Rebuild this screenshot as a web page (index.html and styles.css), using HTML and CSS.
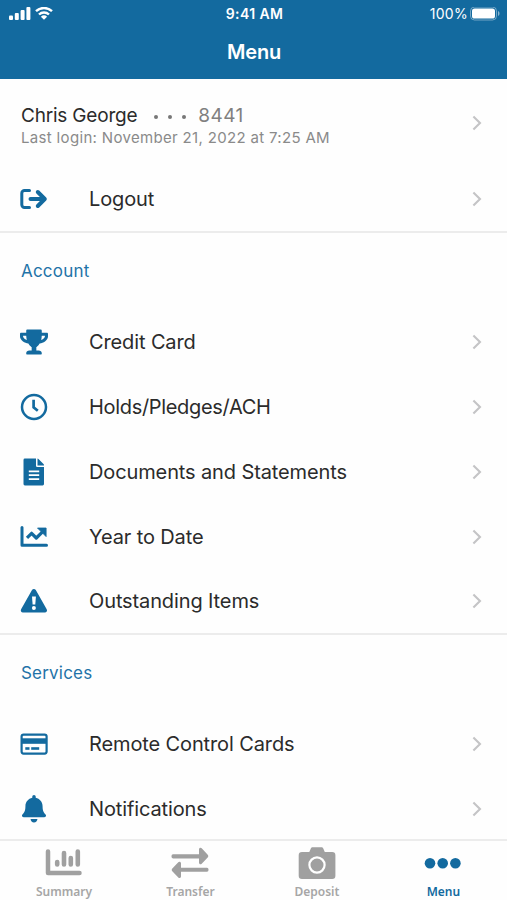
FILE: index.html
```
<!DOCTYPE html>
<html lang="en">
<head>
    <meta charset="UTF-8">
    <meta name="viewport" content="width=device-width, initial-scale=1.0">
    <title>Menu</title>
    <link rel="stylesheet" href="styles.css">
</head>
<body>
    <svg class="sprite">
        <symbol id="chevron" viewBox="0 0 10 16">
            <path d="M1.4 1.4 8 8l-6.6 6.6" fill="none" stroke="#c4c4c6" stroke-width="2.1"/>
        </symbol>
    </svg>
    <header class="header">
        <div class="status">
            <div class="status-left">
                <svg class="signal" viewBox="0 0 22 14" width="22" height="14" fill="#fff">
                    <rect x="0" y="8.5" width="4" height="4.5" rx="1"/>
                    <rect x="5.8" y="6" width="4" height="7" rx="1"/>
                    <rect x="11.6" y="3" width="4" height="10" rx="1"/>
                    <rect x="17.4" y="0" width="4" height="13" rx="1"/>
                </svg>
                <svg class="wifi" viewBox="0 0 18 14" width="18" height="14">
                    <path d="M1 4.2a11.6 11.6 0 0 1 16 0M4 7.5a7.2 7.2 0 0 1 10 0" fill="none" stroke="#fff" stroke-width="2.4"/>
                    <path d="M9 12.7 5.9 9.8a4.5 4.5 0 0 1 6.2 0z" fill="#fff"/>
                </svg>
            </div>
            <div class="time">9:41 AM</div>
            <div class="status-right">
                <span class="percent">100%</span>
                <svg class="battery" viewBox="0 0 30 14" width="30" height="14">
                    <rect x="0.5" y="0" width="26" height="13" rx="4" fill="none" stroke="#fff" stroke-opacity=".4"/>
                    <rect x="2" y="1.5" width="23" height="10" rx="2.6" fill="#fff"/>
                    <path d="M28 4c2 .8 2 4.2 0 5z" fill="#fff" fill-opacity=".5"/>
                </svg>
            </div>
        </div>
        <h1 class="title">Menu</h1>
    </header>

    <main class="content">
        <section class="group">
            <div class="profile">
                <div class="profile-info">
                    <div class="profile-name"><span class="name">Chris George</span><span class="dots"><i></i><i></i><i></i></span><span class="number">8441</span></div>
                    <div class="last-login">Last login: November 21, 2022 at 7:25 AM</div>
                </div>
                <svg class="chevron"><use href="#chevron"/></svg>
            </div>
            <div class="row">
                <svg class="icon" viewBox="0 0 28 28">
                    <path d="M9.5 5.5h-5a2.7 2.7 0 0 0-2.7 2.7v11.6a2.7 2.7 0 0 0 2.7 2.7h5" fill="none" stroke="#136a9f" stroke-width="3" stroke-linecap="round"/>
                    <path d="M10.5 14H24M17.8 7l7 7-7 7" fill="none" stroke="#136a9f" stroke-width="4" stroke-linejoin="round" stroke-linecap="round"/>
                </svg>
                <span class="label">Logout</span>
                <svg class="chevron"><use href="#chevron"/></svg>
            </div>
        </section>

        <section class="group">
            <h2 class="heading">Account</h2>
            <div class="row">
                <svg class="icon" viewBox="0 -32 576 576">
                    <path d="M552 64H448V24c0-13.3-10.7-24-24-24H152c-13.3 0-24 10.7-24 24v40H24C10.7 64 0 74.7 0 88v56c0 35.7 22.5 72.4 61.9 100.7 31.5 22.7 69.8 37.1 110 41.7C203.3 338.5 240 360 240 360v72h-48c-35.3 0-64 20.7-64 56v12c0 6.6 5.4 12 12 12h296c6.6 0 12-5.4 12-12v-12c0-35.3-28.7-56-64-56h-48v-72s36.7-21.5 68.1-73.6c40.3-4.6 78.6-19 110-41.7 39.3-28.3 61.9-65 61.9-100.7V88c0-13.3-10.7-24-24-24zM99.3 192.8C74.9 175.2 64 155.6 64 144v-16h64.2c1 32.6 5.8 61.2 12.8 86.2-15.1-5.2-29.2-12.4-41.7-21.4zM512 144c0 16.1-17.7 36.1-35.3 48.8-12.5 9-26.7 16.2-41.8 21.4 7-25 11.8-53.6 12.8-86.2H512v16z"/>
                </svg>
                <span class="label">Credit Card</span>
                <svg class="chevron"><use href="#chevron"/></svg>
            </div>
            <div class="row">
                <svg class="icon" viewBox="0 0 28 28">
                    <circle cx="14" cy="14" r="12" fill="none" stroke="#136a9f" stroke-width="2.5"/>
                    <path d="M13.6 6.8v7.6l4.2 3.4" fill="none" stroke="#136a9f" stroke-width="2.7"/>
                </svg>
                <span class="label tight">Holds/Pledges/ACH</span>
                <svg class="chevron"><use href="#chevron"/></svg>
            </div>
            <div class="row">
                <svg class="icon" viewBox="0 0 28 28">
                    <path d="M4.9.5H16v7.2a1.3 1.3 0 0 0 1.3 1.3H24v17a1.4 1.4 0 0 1-1.4 1.4H4.9A1.4 1.4 0 0 1 3.5 26V1.9A1.4 1.4 0 0 1 4.9.5z"/>
                    <path d="M17.5.5c.4 0 .7.2 1 .5l5 5c.3.3.5.6.5 1v.5h-6.5z"/>
                    <path d="M8.8 13.3h10.4M8.8 17.2h10.4M8.8 21.1h10.4" stroke="#fff" stroke-width="1.7"/>
                </svg>
                <span class="label">Documents and Statements</span>
                <svg class="chevron"><use href="#chevron"/></svg>
            </div>
            <div class="row">
                <svg class="icon" viewBox="0 0 28 28">
                    <path d="M2 4.5v17.8h24.5" fill="none" stroke="#136a9f" stroke-width="3" stroke-linecap="round" stroke-linejoin="round"/>
                    <path d="M7 14.8l4.6-4.5 4.7 4.7 6.2-6.2" fill="none" stroke="#136a9f" stroke-width="3.2" stroke-linejoin="round"/>
                    <path d="M17.5 5h8.6v8.6z" stroke="#136a9f" stroke-width=".8" stroke-linejoin="round"/>
                </svg>
                <span class="label">Year to Date</span>
                <svg class="chevron"><use href="#chevron"/></svg>
            </div>
            <div class="row">
                <svg class="icon" viewBox="0 0 28 28">
                    <path d="M12 3c.9-1.5 2.9-1.5 3.8 0l10.9 19.3c.9 1.5-.2 3.2-1.8 3.2H2.9c-1.6 0-2.7-1.7-1.8-3.2z"/>
                    <path d="M12 9.4h3.9l-.6 8.2h-2.7z" fill="#fff"/>
                    <circle cx="13.9" cy="21" r="2" fill="#fff"/>
                </svg>
                <span class="label">Outstanding Items</span>
                <svg class="chevron"><use href="#chevron"/></svg>
            </div>
        </section>

        <section class="group last">
            <h2 class="heading">Services</h2>
            <div class="row">
                <svg class="icon" viewBox="0 0 28 28">
                    <rect x="1.6" y="4.6" width="25" height="19" rx="2" fill="none" stroke="#136a9f" stroke-width="2.2"/>
                    <rect x="1" y="8.3" width="26" height="5.5"/>
                    <rect x="5.3" y="17.2" width="4.2" height="2.6"/>
                    <rect x="11.2" y="17.2" width="8" height="2.6"/>
                </svg>
                <span class="label">Remote Control Cards</span>
                <svg class="chevron"><use href="#chevron"/></svg>
            </div>
            <div class="row">
                <svg class="icon" viewBox="-37 0 522 522">
                    <path d="M224 512c35.32 0 63.97-28.65 63.97-64H160.03c0 35.35 28.65 64 63.97 64zm215.39-149.71c-19.32-20.76-55.47-51.99-55.47-154.29 0-77.7-54.48-139.9-127.94-155.16V32c0-17.67-14.32-32-31.98-32s-31.98 14.33-31.98 32v20.84C118.56 68.1 64.08 130.3 64.08 208c0 102.3-36.15 133.53-55.47 154.29-6 6.45-8.66 14.16-8.61 21.71.11 16.4 12.98 32 32.1 32h383.8c19.12 0 32-15.6 32.1-32 .05-7.55-2.61-15.27-8.61-21.71z"/>
                </svg>
                <span class="label">Notifications</span>
                <svg class="chevron"><use href="#chevron"/></svg>
            </div>
        </section>
    </main>

    <nav class="tabs">
        <a class="tab">
            <svg viewBox="0 0 38 34" width="38" height="34">
                <path d="M3 4.5v21.5h31.5" fill="none" stroke="#a0a0a0" stroke-width="4.5" stroke-linecap="round" stroke-linejoin="round"/>
                <path d="M12.2 15v2.5M19 6v11.500M25.8 11v6.5M32.8 4.500v13" stroke="#a0a0a0" stroke-width="4.6" stroke-linecap="round"/>
            </svg>
            <span>Summary</span>
        </a>
        <a class="tab">
            <svg viewBox="0 0 38 34" width="38" height="34" fill="#a0a0a0">
                <path d="M2 7.2h26V2.600c0-1.8 1.6-2.4 2.7-1.3l6 6.5c.8.9.8 1.9 0 2.8l-6 6.2c-1.1 1.1-2.7.5-2.7-1.2v-4.200H2A1.800 1.800 0 0 1 .5 9.400V8.900A1.700 1.700 0 0 1 2 7.200z"/>
                <path d="M36 20.800H10v-4.300c0-1.800-1.600-2.400-2.700-1.300l-6 6.300c-.8.900-.8 1.900 0 2.800l6 6.200c1.100 1.100 2.700.5 2.700-1.200v-4.500h26a1.800 1.800 0 0 0 1.500-1.800v-.5a1.700 1.700 0 0 0-1.500-1.700z"/>
            </svg>
            <span>Transfer</span>
        </a>
        <a class="tab">
            <svg viewBox="0 0 38 34" width="38" height="34">
                <path d="M4 4.9h7.3l1.3-3C13 .8 13.6.3 14.5.3h9c1 0 1.6.5 2 1.6l1.3 3H34a3.3 3.3 0 0 1 3.4 3.300v20.500A3.300 3.300 0 0 1 34 32H4a3.300 3.300 0 0 1-3.300-3.300V8.200A3.300 3.300 0 0 1 4 4.900z" fill="#a0a0a0"/>
                <circle cx="19" cy="18" r="7.6" fill="none" stroke="#fff" stroke-width="2.2"/>
            </svg>
            <span>Deposit</span>
        </a>
        <a class="tab active">
            <svg viewBox="0 0 38 34" width="38" height="34" fill="#136a9f">
                <circle cx="6" cy="16.2" r="5.3"/>
                <circle cx="18.7" cy="16.2" r="5.3"/>
                <circle cx="31.4" cy="16.2" r="5.3"/>
            </svg>
            <span>Menu</span>
        </a>
    </nav>
</body>
</html>
```
FILE: styles.css
```
* {
    box-sizing: border-box;
}
body {
    margin: 0;
    height: 900px;
    display: flex;
    flex-direction: column;
    overflow: hidden;
    background-color: #fefefe;
    color: #2b2b2b;
    font-family: Inter, "Liberation Sans", sans-serif;
}
.sprite {
    display: none;
}
.header {
    flex: none;
    height: 79px;
    background-color: #136a9f;
    color: #ffffff;
}
.status {
    display: grid;
    grid-template-columns: 1fr auto 1fr;
    align-items: center;
    height: 27px;
    padding: 0 7px 0 9px;
    font-size: 14px;
    line-height: 28px;
}
.status-left, .status-right {
    display: flex;
    align-items: center;
}
.status-left {
    gap: 4px;
}
.status-right {
    justify-content: flex-end;
    gap: 2px;
}
.time {
    font-weight: 600;
    letter-spacing: 0.4px;
}
.percent {
    letter-spacing: 0.3px;
}
.title {
    margin: 10px 0 0;
    padding-left: 1px;
    font-size: 20px;
    font-weight: 600;
    letter-spacing: -0.2px;
    line-height: 30px;
    text-align: center;
}
.content {
    flex: 1;
    min-height: 0;
    overflow: hidden;
}
.group {
    border-bottom: 2px solid #ececec;
}
.group.last {
    border-bottom: none;
}
.profile {
    display: flex;
    align-items: center;
    height: 88.4px;
    padding: 0 25px 0 21px;
}
.profile-info {
    flex: 1;
    padding-top: 7px;
}
.profile-name {
    display: flex;
    align-items: center;
    font-size: 19px;
    line-height: 22px;
}
.name {
    letter-spacing: -0.2px;
}
.dots {
    display: flex;
    gap: 10px;
    margin: 2px 12px 0 17px;
}
.dots i {
    width: 4px;
    height: 4px;
    border-radius: 50%;
    background-color: #777777;
}
.number {
    color: #808080;
    letter-spacing: 0.4px;
}
.last-login {
    color: #8a8a8a;
    font-size: 15px;
    letter-spacing: 0.33px;
    line-height: 21px;
}
.row {
    display: flex;
    align-items: center;
    height: 64.8px;
    padding: 0 25px 0 20px;
}
.row:last-child {
    height: 64px;
}
.last .row:last-child {
    height: 65.6px;
}
.icon {
    width: 28px;
    height: 28px;
    fill: #136a9f;
}
.label {
    flex: 1;
    margin-left: 41px;
    font-size: 20px;
    letter-spacing: -0.12px;
    line-height: 28px;
    white-space: nowrap;
}
.label.tight {
    letter-spacing: -0.32px;
}
.chevron {
    width: 10px;
    height: 16px;
}
.heading {
    margin: 0;
    padding-left: 21px;
    height: 76.4px;
    color: #1f73a8;
    font-size: 17px;
    font-weight: 400;
    letter-spacing: 0.2px;
    line-height: 76px;
}
.tabs {
    flex: none;
    display: grid;
    grid-template-columns: repeat(4, 126.5px);
    height: 61px;
    padding-left: 0.7px;
    border-top: 2px solid #ececec;
}
.tab {
    display: flex;
    flex-direction: column;
    align-items: center;
    padding-top: 6px;
    color: #a6a6a6;
    font-family: "Noto Sans", sans-serif;
    font-size: 12px;
    font-weight: 600;
    line-height: 21px;
}
.tab.active {
    color: #136a9f;
}
```
